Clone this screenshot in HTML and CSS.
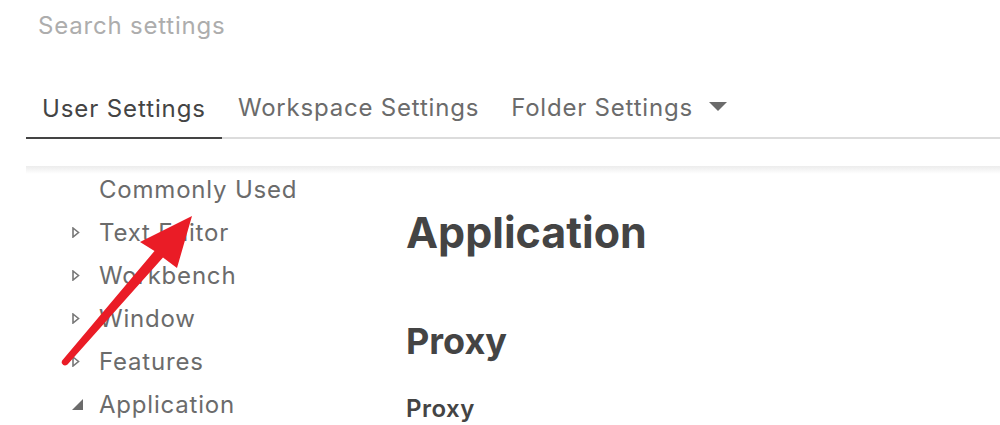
FILE: index.html
```html
<!DOCTYPE html>
<html lang="en">

<head>
    <meta charset="UTF-8">
    <meta name="viewport" content="width=device-width, initial-scale=1.0">
    <title>Settings</title>
    <link rel="stylesheet" href="styles.css">
</head>

<body>
    <div class="editor">
        <div class="search">Search settings</div>
        <nav class="tabs">
            <span class="tab active">User Settings</span>
            <span class="tab">Workspace Settings</span>
            <span class="tab">Folder Settings</span>
            <svg class="caret" width="18" height="10" viewBox="0 0 18 10">
                <path d="M0 0H18L9 9Z" fill="#6b6b6b" />
            </svg>
        </nav>
        <div class="shadow"></div>
        <div class="body">
            <ul class="tree">
                <li><span class="twisty"></span>Commonly Used</li>
                <li><span class="twisty"><svg width="8" height="11" viewBox="0 0 8 11"><path d="M1 1L6.5 5.5L1 10Z" fill="none" stroke="#777" stroke-width="1.6" /></svg></span>Text Editor</li>
                <li><span class="twisty"><svg width="8" height="11" viewBox="0 0 8 11"><path d="M1 1L6.5 5.5L1 10Z" fill="none" stroke="#777" stroke-width="1.6" /></svg></span>Workbench</li>
                <li><span class="twisty"><svg width="8" height="11" viewBox="0 0 8 11"><path d="M1 1L6.5 5.5L1 10Z" fill="none" stroke="#777" stroke-width="1.6" /></svg></span>Window</li>
                <li><span class="twisty"><svg width="8" height="11" viewBox="0 0 8 11"><path d="M1 1L6.5 5.5L1 10Z" fill="none" stroke="#777" stroke-width="1.6" /></svg></span>Features</li>
                <li><span class="twisty"><svg width="11" height="11" viewBox="0 0 11 11"><path d="M11 0V11H0Z" fill="#6b6b6b" /></svg></span>Application</li>
            </ul>
            <section class="content">
                <h1>Application</h1>
                <h2>Proxy</h2>
                <h3>Proxy</h3>
            </section>
        </div>
    </div>
    <!-- annotation arrow drawn over the screenshot -->
    <svg class="arrow" width="1000" height="425" viewBox="0 0 1000 425">
        <path d="M140 242L192 216L177 268L163 257.5L67.5 364.5Q64 367 62 363.5Q61 361.5 63 359.5L154.5 251Z" fill="#ea1c26" />
    </svg>
</body>

</html>
```

FILE: styles.css
```css
body {
    margin: 0;
    background: #fff;
    font-family: Inter, "Liberation Sans", sans-serif;
}

.editor {
    width: 1000px;
    height: 425px;
    overflow: hidden;
}

.search {
    height: 52px;
    padding-left: 38px;
    line-height: 52px;
    font-size: 24px;
    letter-spacing: 0.8px;
    color: #adadad;
}

.tabs {
    display: flex;
    align-items: center;
    margin: 33px 0 0 26px;
    height: 52px;
    border-bottom: 2px solid #dcdcdc;
}

.tab {
    height: 100%;
    display: flex;
    align-items: center;
    padding: 0 16px 8px;
    font-size: 24px;
    letter-spacing: 0.8px;
    color: #6b6b6b;
    box-sizing: border-box;
}

.tab.active {
    color: #444;
    letter-spacing: 0.9px;
    border-bottom: 2px solid #444;
    margin-bottom: -2px;
    height: calc(100% + 2px);
    padding-bottom: 6px;
}

.caret {
    margin-bottom: 8px;
}

.shadow {
    margin: 27px 0 0 26px;
    height: 8px;
    background: linear-gradient(#ececec, #fff);
}

.body {
    display: flex;
}

.tree {
    list-style: none;
    margin: 0;
    padding: 0 0 0 66px;
    width: 406px;
    flex: none;
    box-sizing: border-box;
}

.tree li {
    display: flex;
    align-items: center;
    height: 43px;
    font-size: 24px;
    letter-spacing: 0.8px;
    color: #6b6b6b;
}

.tree li:first-child {
    margin-top: -6px;
}

.twisty {
    width: 33px;
    display: flex;
    align-items: center;
    padding-left: 6px;
    box-sizing: border-box;
}

.content {
    padding-top: 32px;
}

.content h1 {
    margin: 0;
    font-size: 43px;
    line-height: 52px;
    color: #444;
}

.content h2 {
    margin: 61px 0 0;
    font-size: 36px;
    line-height: 44px;
    color: #444;
}

.content h3 {
    margin: 31px 0 0;
    font-size: 24px;
    font-weight: 600;
    letter-spacing: 0.5px;
    color: #444;
}

.arrow {
    position: absolute;
    top: 0;
    left: 0;
    pointer-events: none;
}
```
